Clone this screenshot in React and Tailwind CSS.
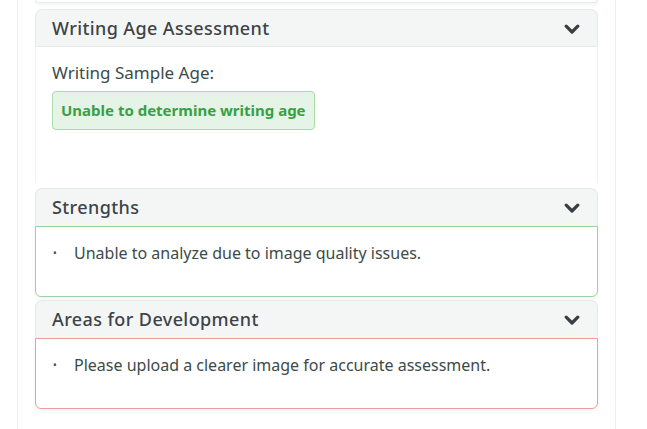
import React from 'react';

const font = { fontFamily: '"Noto Sans", "Open Sans", sans-serif' };

function Chevron() {
    return (
        <svg
            viewBox="0 0 16 11"
            className="w-[16px] h-[11px] mr-[1px] mt-[2px]"
            fill="none"
            stroke="#393e43"
            strokeWidth="3.2"
            strokeLinecap="round"
            strokeLinejoin="round"
        >
            <polyline points="2.2,2.2 8,8 13.8,2.2" />
        </svg>
    );
}

function Header({ title, className = '' }) {
    return (
        <div
            className={`
                h-[38px] flex items-center justify-between
                pl-[16px] pr-[16px]
                bg-[#f4f6f6]
                border border-[#e6e9e9]
                rounded-t-[7px]
                ${className}
            `}
        >
            <span className="text-[18px] font-medium text-[#3d4348] tracking-[0.4px]">
                {title}
            </span>
            <Chevron />
        </div>
    );
}

function BulletBox({ text, border }) {
    return (
        <div className={`h-[71px] bg-white border ${border} rounded-b-[6px] shadow-[0_2px_4px_rgba(0,0,0,0.05)]`}>
            <ul className="pt-[14px] pl-[17px]">
                <li className="flex items-center text-[16px] text-[#3b4b48]">
                    <span className="w-[21px] text-[10px]">•</span>
                    <span>{text}</span>
                </li>
            </ul>
        </div>
    );
}

export default function App() {
    return (
        <div className="min-h-screen bg-white" style={font}>
            <div className="ml-[17px] w-[599px] h-[429px] border-x border-[#eeeff0] px-[17px] overflow-hidden">
                <div className="h-[3px] border-x border-b border-[#e8eaea] rounded-b-[6px] shadow-[0_2px_3px_rgba(0,0,0,0.05)]" />

                <div className="mt-[6px]">
                    <Header title="Writing Age Assessment" />
                    <div className="h-[136px] border-x border-[#f0f1f1] px-[16px] pt-[14px]">
                        <p className="text-[17px] text-[#3b4b48] leading-[24px]">
                            Writing Sample Age:
                        </p>
                        <div className="mt-[6px] inline-flex items-center h-[39px] px-[8px] bg-[#e6f4e7] border border-[#a9dbad] rounded-[4px]">
                            <span className="text-[15px] font-bold text-[#38a046]">
                                Unable to determine writing age
                            </span>
                        </div>
                    </div>
                </div>

                <div className="mt-[5px]">
                    <Header title="Strengths" className="border-b-0" />
                    <BulletBox
                        text="Unable to analyze due to image quality issues."
                        border="border-[#98d39e]"
                    />
                </div>

                <div className="mt-[3px]">
                    <Header title="Areas for Development" className="border-b-0" />
                    <BulletBox
                        text="Please upload a clearer image for accurate assessment."
                        border="border-[#ef9d98]"
                    />
                </div>
            </div>
        </div>
    );
}
